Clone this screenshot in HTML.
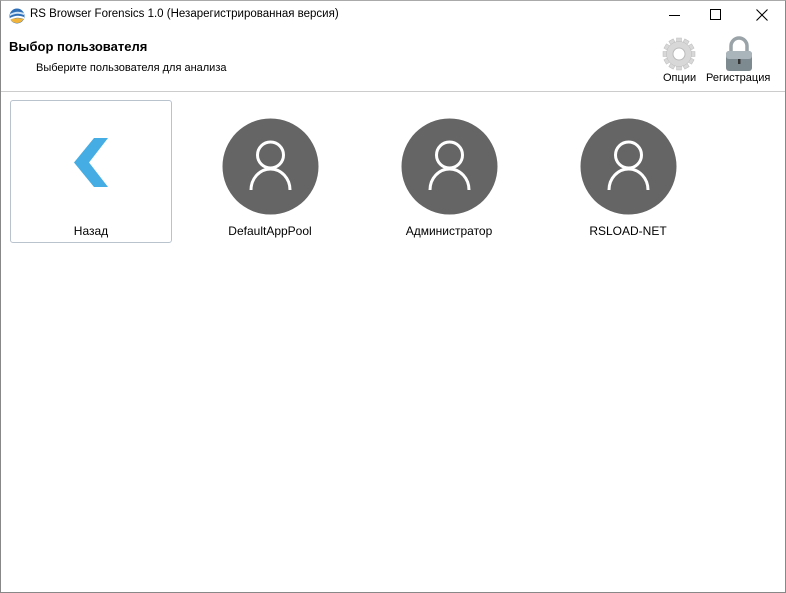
<!DOCTYPE html>
<html><head><meta charset="utf-8"><style>
*{margin:0;padding:0;box-sizing:border-box}
body{width:786px;height:593px;background:#fff;font-family:"Segoe UI","Liberation Sans","DejaVu Sans",sans-serif;position:relative;overflow:hidden;color:#000}
.frame{position:absolute;left:0;top:0;width:786px;height:593px;border:1px solid #888;border-top:1px solid #aaa}
.t{position:absolute;white-space:nowrap}
.lbl{position:absolute;font-size:12px;text-align:center;width:160px}
</style></head><body>
<div class="frame"></div>
<svg style="position:absolute;left:9px;top:8px" width="16" height="16" viewBox="0 0 16 16">
<circle cx="8" cy="8" r="7.5" fill="#2f6fb7"/>
<path d="M1 10 Q8 6 15 9 L15 11 Q8 8 1 12Z" fill="#fff"/>
<path d="M1 6 Q8 2 15 5 L15 7 Q8 4 1 8Z" fill="#cfe3f5"/>
<path d="M1.5 11.5 Q8 9 14.5 11 A7.5 7.5 0 0 1 1.5 11.5Z" fill="#f2b53a"/>
</svg>
<div class="t" style="left:30px;top:8px;font-size:11.5px">RS Browser Forensics 1.0 (Незарегистрированная версия)</div>
<div class="t" style="left:669px;top:15px;width:11px;height:1px;background:#000"></div>
<div class="t" style="left:710px;top:9px;width:11px;height:11px;border:1px solid #000"></div>
<svg style="position:absolute;left:756px;top:9px" width="12" height="12"><path d="M0.5 0.5L11.5 11.5M11.5 0.5L0.5 11.5" stroke="#000" stroke-width="1.1"/></svg>
<div class="t" style="left:9px;top:39px;font-size:13px;font-weight:bold">Выбор пользователя</div>
<div class="t" style="left:36px;top:62px;font-size:11px">Выберите пользователя для анализа</div>
<svg style="position:absolute;left:662px;top:37px" width="34" height="34" viewBox="0 0 34 34">
<g fill="#d8d8d8" stroke="#bbb" stroke-width="0.5">
<g transform="translate(17 17)">
<rect x="-2.5" y="-16" width="5" height="32"/><rect x="-2.5" y="-16" width="5" height="32" transform="rotate(30)"/><rect x="-2.5" y="-16" width="5" height="32" transform="rotate(60)"/><rect x="-2.5" y="-16" width="5" height="32" transform="rotate(90)"/><rect x="-2.5" y="-16" width="5" height="32" transform="rotate(120)"/><rect x="-2.5" y="-16" width="5" height="32" transform="rotate(150)"/>
<circle r="12.5"/></g></g>
<circle cx="17" cy="17" r="6" fill="#fff" stroke="#bbb"/>
</svg>
<div class="t" style="left:663px;top:72px;font-size:11px">Опции</div>
<svg style="position:absolute;left:723px;top:36px" width="32" height="36" viewBox="0 0 32 36">
<path d="M8 16 V10 A8 8 0 0 1 24 10 V16" fill="none" stroke="#9aa3a8" stroke-width="3.5"/>
<rect x="3" y="15" width="26" height="20" rx="3" fill="#7d8a90"/>
<rect x="3" y="15" width="26" height="8" rx="3" fill="#a9b5ba"/>
<rect x="15" y="23" width="2.5" height="5" fill="#333"/>
</svg>
<div class="t" style="left:706px;top:72px;font-size:11px">Регистрация</div>
<div class="t" style="left:1px;top:91px;width:784px;height:1px;background:#ccc"></div>
<div class="t" style="left:10px;top:100px;width:162px;height:143px;border:1px solid #b9c3ce;border-radius:3px"></div>
<svg style="position:absolute;left:74px;top:138px" width="35" height="50"><path d="M20 0 H34 L15 24.5 L34 49 H20 L0 24.5Z" fill="#45ade3"/></svg>
<div class="lbl" style="left:11px;top:224px">Назад</div>
<svg style="position:absolute;left:222px;top:118px" width="97" height="97" viewBox="0 0 97 97"><circle cx="48.5" cy="48.5" r="48" fill="#656565"/><circle cx="48.5" cy="37" r="13" fill="none" stroke="#fff" stroke-width="3"/><path d="M29 72 A19.5 21 0 0 1 68 72" fill="none" stroke="#fff" stroke-width="3"/></svg>
<div class="lbl" style="left:190px;top:224px">DefaultAppPool</div>
<svg style="position:absolute;left:401px;top:118px" width="97" height="97" viewBox="0 0 97 97"><circle cx="48.5" cy="48.5" r="48" fill="#656565"/><circle cx="48.5" cy="37" r="13" fill="none" stroke="#fff" stroke-width="3"/><path d="M29 72 A19.5 21 0 0 1 68 72" fill="none" stroke="#fff" stroke-width="3"/></svg>
<div class="lbl" style="left:369px;top:224px">Администратор</div>
<svg style="position:absolute;left:580px;top:118px" width="97" height="97" viewBox="0 0 97 97"><circle cx="48.5" cy="48.5" r="48" fill="#656565"/><circle cx="48.5" cy="37" r="13" fill="none" stroke="#fff" stroke-width="3"/><path d="M29 72 A19.5 21 0 0 1 68 72" fill="none" stroke="#fff" stroke-width="3"/></svg>
<div class="lbl" style="left:548px;top:224px">RSLOAD-NET</div>
</body></html>
